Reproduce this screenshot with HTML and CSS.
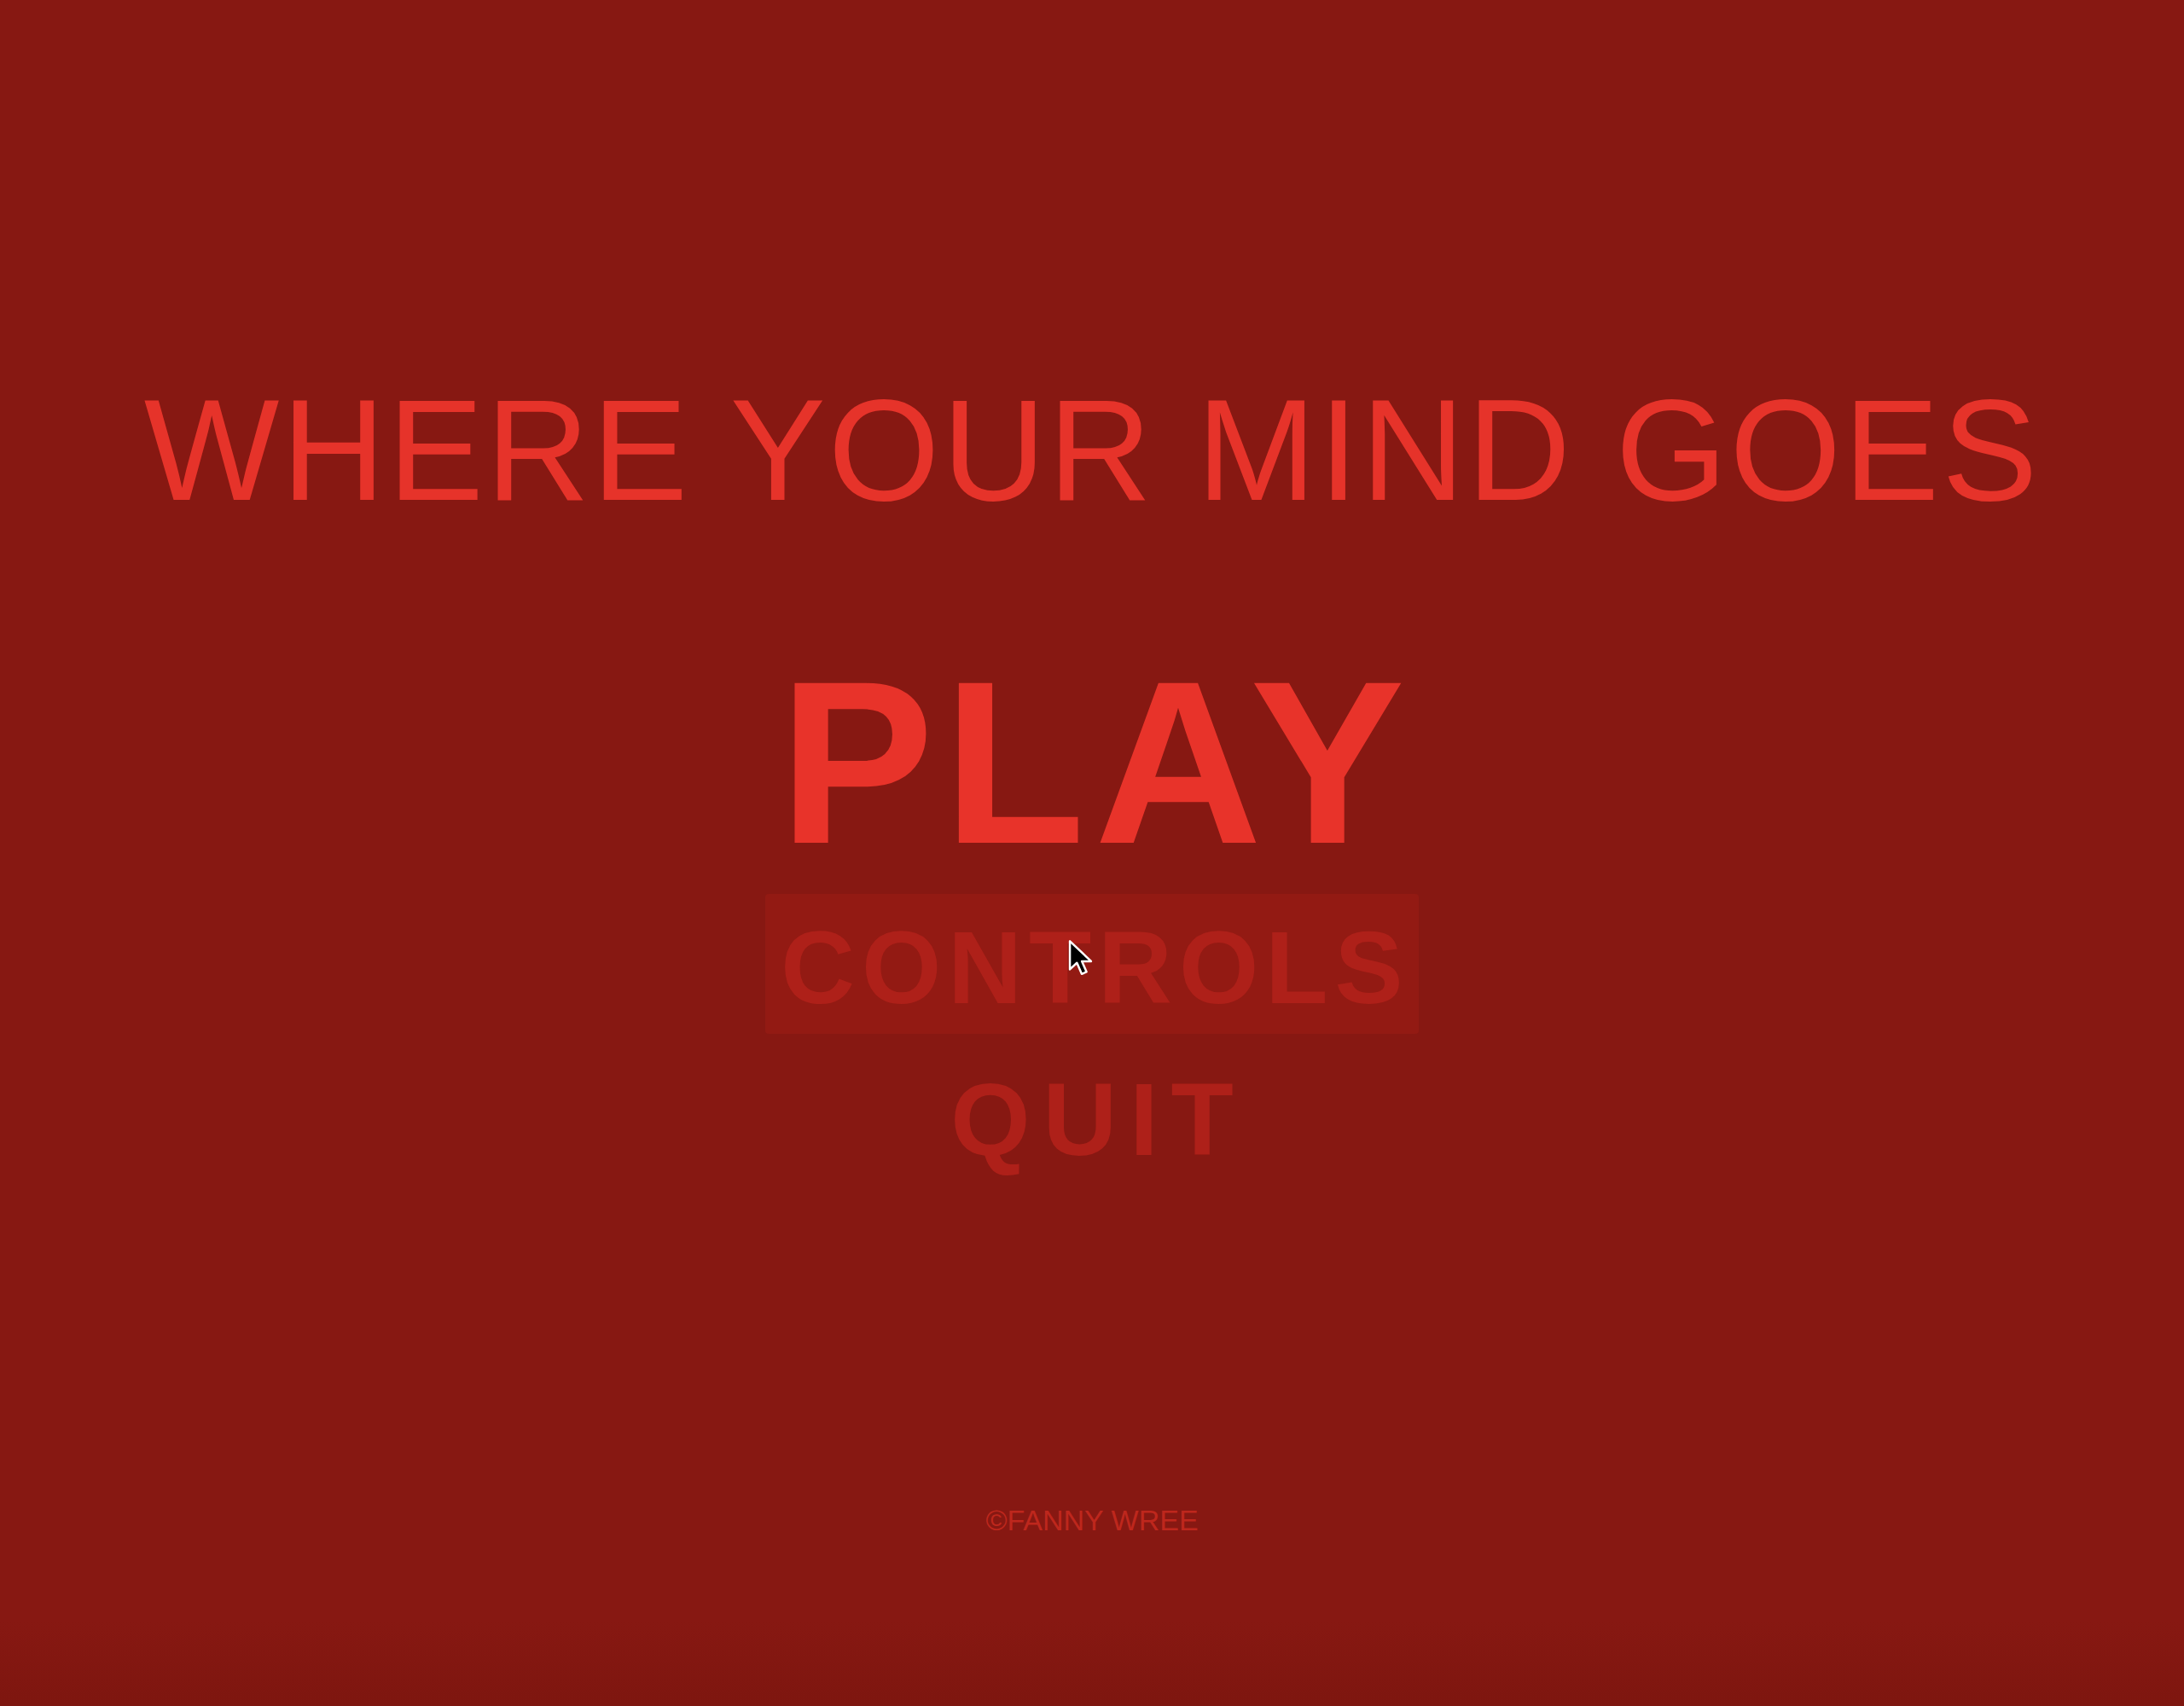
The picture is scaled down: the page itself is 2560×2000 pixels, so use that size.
FILE: index.html
```html
<!DOCTYPE html>
<html lang="en">
<head>
    <meta charset="UTF-8">
    <meta name="viewport" content="width=device-width, initial-scale=1.0">
    <title>Where Your Mind Goes</title>
    <link rel="stylesheet" href="styles.css">
</head>
<body>

<main class="menu">
    <h1 class="title">WHERE YOUR MIND GOES</h1>

    <nav class="options">
        <a href="#" class="play">PLAY</a>
        <a href="#" class="option controls hover">CONTROLS</a>
        <a href="#" class="option quit">QUIT</a>
    </nav>

    <footer class="credit">&copy;FANNY WREE</footer>
</main>

<!-- mouse pointer resting on the hovered option -->
<svg class="pointer" width="29" height="45" viewBox="0 0 14 21.5">
    <path d="M1 1 V17 L5 13.3 L7.7 19.6 L10.4 18.4 L7.8 12.4 H13 Z" fill="#000" stroke="#fff" stroke-width="1.2" stroke-linejoin="round"/>
</svg>

</body>
</html>
```

FILE: styles.css
```css
body {
    margin: 0;
    padding: 0;
    min-height: 2000px;
    background: linear-gradient(to bottom, #871812 95%, #7e160f 100%);
    font-family: "Liberation Sans", Arial, sans-serif;
    position: relative;
}

.menu {
    display: flex;
    flex-direction: column;
    align-items: center;
    padding-top: 444px;
}

.title {
    margin: 0;
    font-size: 168px;
    font-weight: normal;
    line-height: 1;
    letter-spacing: 3px;
    color: #e6332a;
}

.options {
    display: flex;
    flex-direction: column;
    align-items: center;
}

.options a {
    text-decoration: none;
    font-weight: bold;
    line-height: 1;
}

.play {
    margin-top: 146px;
    font-size: 272px;
    letter-spacing: 11px;
    padding-left: 11px;
    color: #e8332a;
}

.option {
    font-size: 120px;
    color: #ae2019;
    border-radius: 4px;
}

/* trailing letter-spacing is taken off the right padding */
.controls {
    margin-top: 18px;
    padding: 26px 10px 18px 18px;
    letter-spacing: 8px;
}

.hover {
    background-color: #931a13;
}

.quit {
    margin-top: 40px;
    padding-left: 15px;
    letter-spacing: 15px;
}

.credit {
    margin-top: 393px;
    font-size: 34px;
    line-height: 1;
    color: #be271d;
}

.pointer {
    position: absolute;
    left: 1252px;
    top: 1101px;
}
```
